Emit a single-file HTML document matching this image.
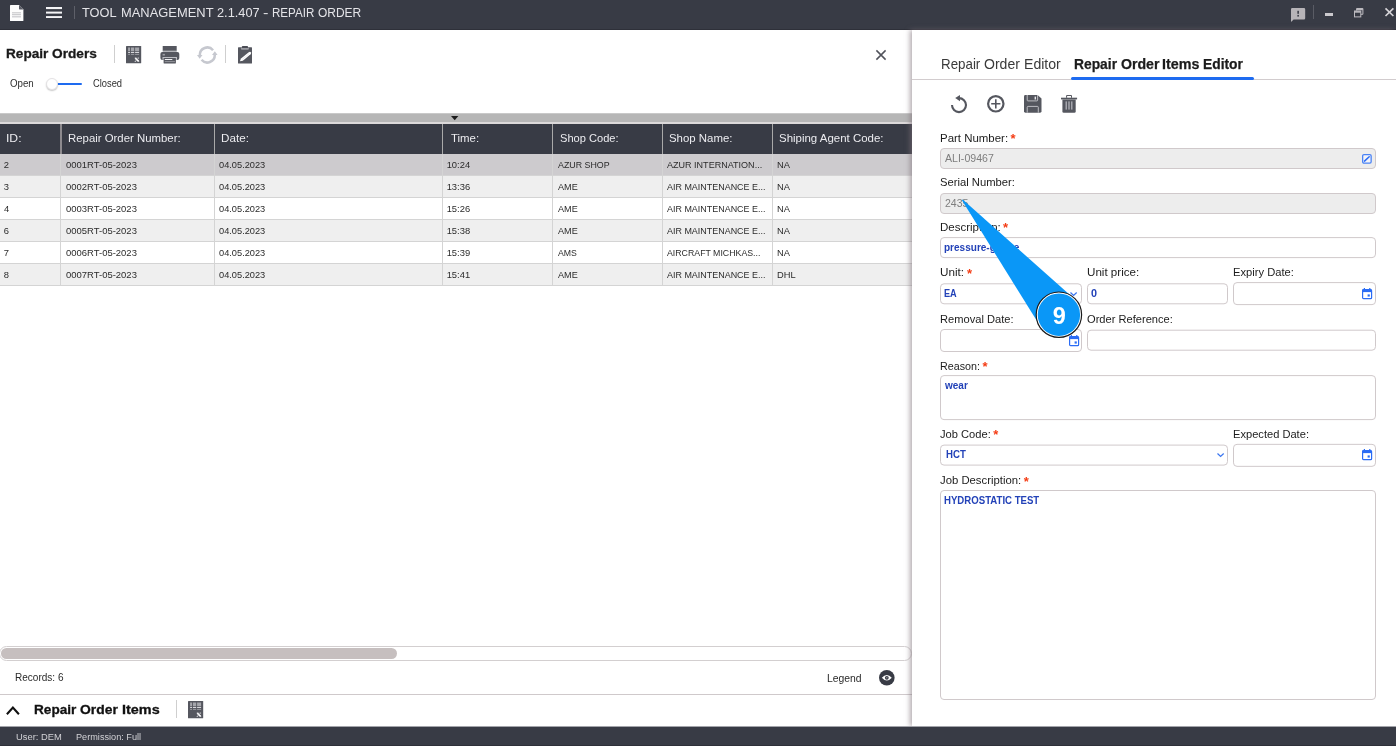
<!DOCTYPE html>
<html><head><meta charset="utf-8">
<style>
*{box-sizing:border-box;margin:0;padding:0}
html,body{width:1396px;height:746px;overflow:hidden;background:#fff;font-family:"Liberation Sans",sans-serif;color:#222}
#root{position:absolute;left:0;top:0;width:1396px;height:746px;will-change:transform}
svg{position:absolute;overflow:visible}
.t{position:absolute;white-space:pre;line-height:1;display:block}
#titlebar{position:absolute;left:0;top:0;width:1396px;height:30px;background:#383b45;border-bottom:1px solid #2e3039}
#status{position:absolute;left:0;top:726px;width:1396px;height:20px;background:#383b45;border-top:1px solid #a3a4aa;border-bottom:1px solid #2e3039}
#right{position:absolute;left:912px;top:30px;width:484px;height:696px;background:#fff;box-shadow:-2px 0 5px rgba(125,112,120,.6)}
#right svg{z-index:2}
.vsep{position:absolute;width:1px;background:#cfcfcf}
#gbar{position:absolute;left:0;top:113px;width:912px;height:11px;background:#b6b6b6;border-bottom:2px solid #dcd9da;border-top:1px solid #c9c9c9}
#ghead{position:absolute;left:0;top:124px;width:912px;height:30px;background:#383b45;overflow:hidden}
.th{position:absolute;top:0;height:30px;border-left:1px solid #a9a9a9}
.row{position:absolute;left:0;width:912px;height:22px;border-bottom:1px solid #d4d4d4;overflow:hidden}
.row div{position:absolute;top:0;height:22px;border-left:1px solid #d4d4d4}
.inp{position:absolute;border:1px solid #d0c9cb;border-radius:4px;background:#fff}
.dis{background:#ededed}
</style></head><body>
<div id="root">
<div id="titlebar">
<svg style="left:10.4px;top:4.7px" width="13.4" height="16.1" viewBox="0 0 13.4 16.1"><path d="M.6 0H9L13.4 4.4V15.5Q13.4 16.1 12.8 16.1H.6Q0 16.1 0 15.5V.6Q0 0 .6 0Z" fill="#fdfdfd"/><path d="M9 0L13.4 4.4H9.6Q9 4.4 9 3.8Z" fill="#5a5c66"/>
<g fill="#b9b9bd"><rect x="2" y="7.4" width="9" height=".9"/><rect x="2" y="9.3" width="9" height=".9"/><rect x="2" y="11.4" width="9" height=".9"/></g></svg>
<svg style="left:46.2px;top:7px" width="16" height="11" viewBox="0 0 16 11"><g fill="#f4f4f6"><rect y="0" width="16" height="2.1"/><rect y="4.6" width="16" height="2"/><rect y="9.1" width="16" height="1.9"/></g></svg>
<div style="position:absolute;left:74.3px;top:5.7px;width:1.2px;height:13px;background:#5e6069"></div>
<svg style="left:1290.6px;top:8.1px" width="14.2" height="14" viewBox="0 0 14.2 14"><path d="M1.2 0H13Q14.2 0 14.2 1.2V10.2Q14.2 11.4 13 11.4H2.6L0 14V1.2Q0 0 1.2 0Z" fill="#b7b4b8"/><rect x="6.3" y="2.8" width="1.7" height="3" fill="#44464f"/><rect x="6.3" y="6.9" width="1.7" height="1.7" fill="#44464f"/></svg>
<div style="position:absolute;left:1313px;top:5.4px;width:1.2px;height:13.3px;background:#5a5c65"></div>
<div style="position:absolute;left:1325px;top:13px;width:8px;height:2.8px;background:#cbc9cd"></div>
<svg style="left:1354.4px;top:7.9px" width="9.4" height="9.4" viewBox="0 0 9.4 9.4"><g fill="none" stroke="#bdbbc0" stroke-width="1"><path d="M2.6 2.6V.5H8.9V6.3H6.8"/><path d="M2.6 1.4H8.9" stroke-width="1.6"/><rect x=".5" y="3" width="6.3" height="5.9"/><path d="M.5 3.9H6.8" stroke-width="1.6"/></g></svg>
<svg style="left:1384.6px;top:8.3px" width="8.9" height="8.3" viewBox="0 0 8.9 8.3"><path d="M.5 .3L8.4 8M8.4 .3L.5 8" stroke="#d6d4d8" stroke-width="1.7"/></svg>
 
<span class="t" style="left:82.26px;top:6.39px;font-size:13.6px;color:#e4e4e8;transform:scaleX(0.9417);transform-origin:0 0;">TOOL</span>
<span class="t" style="left:120.75px;top:6.39px;font-size:13.6px;color:#e4e4e8;transform:scaleX(0.9496);transform-origin:0 0;">MANAGEMENT</span>
<span class="t" style="left:216.50px;top:6.39px;font-size:13.6px;color:#e4e4e8;transform:scaleX(0.9386);transform-origin:0 0;">2.1.407</span>
<span class="t" style="left:263.20px;top:6.39px;font-size:13.6px;color:#e4e4e8;transform:scaleX(1.2000);transform-origin:0 0;">-</span>
<span class="t" style="left:272.15px;top:6.39px;font-size:13.6px;color:#e4e4e8;transform:scaleX(0.8521);transform-origin:0 0;">REPAIR</span>
<span class="t" style="left:318.46px;top:6.39px;font-size:13.6px;color:#e4e4e8;transform:scaleX(0.8813);transform-origin:0 0;">ORDER</span>
</div>
<span class="t" style="left:6.14px;top:47.07px;font-size:13.5px;font-weight:bold;color:#1a1a1a;-webkit-text-stroke:.3px #1a1a1a;transform:scaleX(1.0073);transform-origin:0 0;">Repair</span><span class="t" style="left:52.39px;top:47.07px;font-size:13.5px;font-weight:bold;color:#1a1a1a;-webkit-text-stroke:.3px #1a1a1a;transform:scaleX(1.0127);transform-origin:0 0;">Orders</span>
<div class="vsep" style="left:114px;top:45px;height:18px"></div><div class="vsep" style="left:225px;top:45px;height:18px"></div>
<svg  style="left:125.8px;top:46px" width="15.2" height="17.3" viewBox="0 0 15.2 17.3"><rect width="15.2" height="17.3" rx=".5" fill="#55575f"/>
<g fill="#a4a5ab"><rect x="2.1" y="1.5" width="2" height="3.8"/><rect x="5" y="1.5" width="3.2" height="3.8"/><rect x="9.1" y="1.5" width="4" height="3.8"/></g>
<g fill="#d6d6da"><rect x="2.1" y="6" width="2" height="1"/><rect x="5" y="6" width="3.2" height="1"/><rect x="9.1" y="6" width="4" height="1"/></g>
<g fill="#a9aab0"><rect x="2.1" y="7.9" width="2" height=".8"/><rect x="5" y="7.9" width="3.2" height=".8"/><rect x="9.1" y="7.9" width="4" height=".8"/></g>
<path d="M9.3 12.1L12.7 15.4" stroke="#fff" stroke-width="1.5"/><path d="M12.7 12.1L9.1 15.4" stroke="#d0d0d4" stroke-width=".8"/><path d="M8.7 12h1.9M11.6 12h1.5M8.6 15.5h1.5M11.6 15.5h1.7" stroke="#e4e4e7" stroke-width=".6"/></svg><svg  style="left:160.4px;top:46px" width="19.6" height="17.5" viewBox="0 0 19.6 17.5"><rect x="2.7" y="0" width="14" height="4.85" fill="#55575f"/><rect x="2.7" y="4.85" width="14" height="1.2" fill="#b4b5ba"/>
<rect x=".4" y="6" width="18.9" height="7.9" rx="2" fill="#55575f"/><rect x="2.5" y="11" width="14.5" height="2.9" fill="#bfc0c5"/>
<rect x="3.6" y="11.9" width="12.3" height="5.5" rx=".4" fill="#55575f"/><rect x="4.8" y="13" width="7.5" height="1" fill="#f2f2f4"/><rect x="4.8" y="15.2" width="10.1" height=".9" fill="#9c9da3"/>
<rect x="2.6" y="7.9" width="2.3" height="1.6" fill="#9fa0a6"/></svg><svg  style="left:197.3px;top:46px" width="20.6" height="18" viewBox="0 0 20.6 18"><g fill="none" stroke="#c6c8cf" stroke-width="2.5">
<path d="M16.05 4.18A7.5 7.5 0 0 0 2.8 9.2"/><path d="M4.55 13.82A7.5 7.5 0 0 0 17.8 8.8"/></g>
<path d="M0 8.9H5.5L2.7 12.7Z" fill="#c6c8cf"/><path d="M15 9.1H20.6L17.8 5.2Z" fill="#c6c8cf"/></svg><svg  style="left:238.1px;top:46px" width="14.1" height="17.4" viewBox="0 0 14.1 17.4"><rect x="0" y="1.15" width="14" height="16.25" rx=".5" fill="#55575f"/>
<rect x="2.9" y="1.15" width="8" height="2.6" rx="1" fill="#9b9ca2"/><rect x="4" y="0" width="6" height="2.1" rx=".6" fill="#4b4d55"/>
<path d="M1.9 15.3L2.98 12.53L10.78 6.13Q12.3 5.1 13 6.4Q13.4 7.5 12.62 8.37L4.82 14.77Z" fill="#fff"/><path d="M4.6 13.1L10.8 8" stroke="#d9d9dd" stroke-width="1" stroke-dasharray=".7 .5"/></svg><svg  style="left:876.4px;top:49.6px" width="10" height="10" viewBox="0 0 10 10"><path d="M.4 .4L9.6 9.6M9.6 .4L.4 9.6" stroke="#50525a" stroke-width="1.5"/></svg>

<span class="t" style="left:10.01px;top:79.23px;font-size:10px;color:#2f2f2f;transform:scaleX(0.9720);transform-origin:0 0;">Open</span>
<span class="t" style="left:93.43px;top:79.23px;font-size:10px;color:#2f2f2f;transform:scaleX(0.9333);transform-origin:0 0;">Closed</span>
<div style="position:absolute;left:52px;top:82.8px;width:29.5px;height:2.7px;background:#1e6bf0;border-radius:2px"></div>
<div style="position:absolute;left:45.6px;top:78px;width:12.4px;height:12.4px;border-radius:6.2px;background:#fff;border:1px solid #e4e2e4;box-shadow:0 1px 1.5px rgba(0,0,0,.22)"></div>
<div id="gbar"></div><svg style="left:451.4px;top:116.4px" width="7.4" height="4.2"><path d="M0 0H7.4L3.7 4.2Z" fill="#1c1c1c"/></svg>
<div id="ghead">
<div class="th" style="left:-1px;width:61px"></div><span class="t" style="left:6.01px;top:9.32px;font-size:11.2px;color:#ececf0;transform:scaleX(1.0857);transform-origin:0 0;">ID:</span>
<div class="th" style="left:60px;width:154px"></div><span class="t" style="left:67.78px;top:9.32px;font-size:11.2px;color:#ececf0;transform:scaleX(1.0179);transform-origin:0 0;">Repair Order Number:</span>
<div class="th" style="left:214px;width:228px"></div><span class="t" style="left:221.36px;top:9.32px;font-size:11.2px;color:#ececf0;transform:scaleX(1.0424);transform-origin:0 0;">Date:</span>
<div class="th" style="left:442px;width:110px"></div><span class="t" style="left:450.54px;top:9.32px;font-size:11.2px;color:#ececf0;transform:scaleX(1.0210);transform-origin:0 0;">Time:</span>
<div class="th" style="left:552px;width:110px"></div><span class="t" style="left:560.20px;top:9.32px;font-size:11.2px;color:#ececf0;transform:scaleX(0.9922);transform-origin:0 0;">Shop Code:</span>
<div class="th" style="left:662px;width:110px"></div><span class="t" style="left:669.49px;top:9.32px;font-size:11.2px;color:#ececf0;transform:scaleX(1.0206);transform-origin:0 0;">Shop Name:</span>
<div class="th" style="left:772px;width:140px"></div><span class="t" style="left:779.49px;top:9.32px;font-size:11.2px;color:#ececf0;transform:scaleX(1.0249);transform-origin:0 0;">Shiping Agent Code:</span>
<div style="position:absolute;left:60px;top:0;width:2px;height:30px;background:#8d8a8e"></div>
</div>
<div class="row" style="top:154px;background:#cdcbce">
<div style="left:-1px;width:61px"></div><span class="t" style="left:3.80px;top:5.94px;font-size:9.4px;color:#2b2b2b;">2</span>
<div style="left:60px;width:154px"></div><span class="t" style="left:65.55px;top:5.94px;font-size:9.4px;color:#2b2b2b;transform:scaleX(1.0101);transform-origin:0 0;">0001RT-05-2023</span>
<div style="left:214px;width:228px"></div><span class="t" style="left:219.35px;top:5.94px;font-size:9.4px;color:#2b2b2b;transform:scaleX(0.9859);transform-origin:0 0;">04.05.2023</span>
<div style="left:442px;width:110px"></div><span class="t" style="left:446.65px;top:5.94px;font-size:9.4px;color:#2b2b2b;">10:24</span>
<div style="left:552px;width:110px"></div><span class="t" style="left:557.50px;top:5.94px;font-size:9.4px;color:#2b2b2b;transform:scaleX(0.9438);transform-origin:0 0;">AZUR SHOP</span>
<div style="left:662px;width:110px"></div><span class="t" style="left:667.30px;top:5.94px;font-size:9.4px;color:#2b2b2b;transform:scaleX(0.9633);transform-origin:0 0;">AZUR INTERNATION...</span>
<div style="left:772px;width:140px"></div><span class="t" style="left:776.65px;top:5.94px;font-size:9.4px;color:#2b2b2b;transform:scaleX(0.9959);transform-origin:0 0;">NA</span>
</div>
<div class="row" style="top:176px;background:#efefef">
<div style="left:-1px;width:61px"></div><span class="t" style="left:3.80px;top:5.94px;font-size:9.4px;color:#2b2b2b;">3</span>
<div style="left:60px;width:154px"></div><span class="t" style="left:65.55px;top:5.94px;font-size:9.4px;color:#2b2b2b;transform:scaleX(1.0101);transform-origin:0 0;">0002RT-05-2023</span>
<div style="left:214px;width:228px"></div><span class="t" style="left:219.35px;top:5.94px;font-size:9.4px;color:#2b2b2b;transform:scaleX(0.9859);transform-origin:0 0;">04.05.2023</span>
<div style="left:442px;width:110px"></div><span class="t" style="left:446.65px;top:5.94px;font-size:9.4px;color:#2b2b2b;">13:36</span>
<div style="left:552px;width:110px"></div><span class="t" style="left:557.50px;top:5.94px;font-size:9.4px;color:#2b2b2b;transform:scaleX(0.9700);transform-origin:0 0;">AME</span>
<div style="left:662px;width:110px"></div><span class="t" style="left:667.30px;top:5.94px;font-size:9.4px;color:#2b2b2b;transform:scaleX(0.9545);transform-origin:0 0;">AIR MAINTENANCE E...</span>
<div style="left:772px;width:140px"></div><span class="t" style="left:776.65px;top:5.94px;font-size:9.4px;color:#2b2b2b;transform:scaleX(0.9959);transform-origin:0 0;">NA</span>
</div>
<div class="row" style="top:198px;background:#ffffff">
<div style="left:-1px;width:61px"></div><span class="t" style="left:4.05px;top:5.94px;font-size:9.4px;color:#2b2b2b;">4</span>
<div style="left:60px;width:154px"></div><span class="t" style="left:65.55px;top:5.94px;font-size:9.4px;color:#2b2b2b;transform:scaleX(1.0101);transform-origin:0 0;">0003RT-05-2023</span>
<div style="left:214px;width:228px"></div><span class="t" style="left:219.35px;top:5.94px;font-size:9.4px;color:#2b2b2b;transform:scaleX(0.9859);transform-origin:0 0;">04.05.2023</span>
<div style="left:442px;width:110px"></div><span class="t" style="left:446.65px;top:5.94px;font-size:9.4px;color:#2b2b2b;">15:26</span>
<div style="left:552px;width:110px"></div><span class="t" style="left:557.50px;top:5.94px;font-size:9.4px;color:#2b2b2b;transform:scaleX(0.9700);transform-origin:0 0;">AME</span>
<div style="left:662px;width:110px"></div><span class="t" style="left:667.30px;top:5.94px;font-size:9.4px;color:#2b2b2b;transform:scaleX(0.9545);transform-origin:0 0;">AIR MAINTENANCE E...</span>
<div style="left:772px;width:140px"></div><span class="t" style="left:776.65px;top:5.94px;font-size:9.4px;color:#2b2b2b;transform:scaleX(0.9959);transform-origin:0 0;">NA</span>
</div>
<div class="row" style="top:220px;background:#efefef">
<div style="left:-1px;width:61px"></div><span class="t" style="left:3.80px;top:5.94px;font-size:9.4px;color:#2b2b2b;">6</span>
<div style="left:60px;width:154px"></div><span class="t" style="left:65.55px;top:5.94px;font-size:9.4px;color:#2b2b2b;transform:scaleX(1.0101);transform-origin:0 0;">0005RT-05-2023</span>
<div style="left:214px;width:228px"></div><span class="t" style="left:219.35px;top:5.94px;font-size:9.4px;color:#2b2b2b;transform:scaleX(0.9859);transform-origin:0 0;">04.05.2023</span>
<div style="left:442px;width:110px"></div><span class="t" style="left:446.65px;top:5.94px;font-size:9.4px;color:#2b2b2b;">15:38</span>
<div style="left:552px;width:110px"></div><span class="t" style="left:557.50px;top:5.94px;font-size:9.4px;color:#2b2b2b;transform:scaleX(0.9700);transform-origin:0 0;">AME</span>
<div style="left:662px;width:110px"></div><span class="t" style="left:667.30px;top:5.94px;font-size:9.4px;color:#2b2b2b;transform:scaleX(0.9545);transform-origin:0 0;">AIR MAINTENANCE E...</span>
<div style="left:772px;width:140px"></div><span class="t" style="left:776.65px;top:5.94px;font-size:9.4px;color:#2b2b2b;transform:scaleX(0.9959);transform-origin:0 0;">NA</span>
</div>
<div class="row" style="top:242px;background:#ffffff">
<div style="left:-1px;width:61px"></div><span class="t" style="left:3.80px;top:5.94px;font-size:9.4px;color:#2b2b2b;">7</span>
<div style="left:60px;width:154px"></div><span class="t" style="left:65.55px;top:5.94px;font-size:9.4px;color:#2b2b2b;transform:scaleX(1.0101);transform-origin:0 0;">0006RT-05-2023</span>
<div style="left:214px;width:228px"></div><span class="t" style="left:219.35px;top:5.94px;font-size:9.4px;color:#2b2b2b;transform:scaleX(0.9859);transform-origin:0 0;">04.05.2023</span>
<div style="left:442px;width:110px"></div><span class="t" style="left:446.65px;top:5.94px;font-size:9.4px;color:#2b2b2b;">15:39</span>
<div style="left:552px;width:110px"></div><span class="t" style="left:557.50px;top:5.94px;font-size:9.4px;color:#2b2b2b;transform:scaleX(0.9300);transform-origin:0 0;">AMS</span>
<div style="left:662px;width:110px"></div><span class="t" style="left:667.30px;top:5.94px;font-size:9.4px;color:#2b2b2b;transform:scaleX(0.9354);transform-origin:0 0;">AIRCRAFT MICHKAS...</span>
<div style="left:772px;width:140px"></div><span class="t" style="left:776.65px;top:5.94px;font-size:9.4px;color:#2b2b2b;transform:scaleX(0.9959);transform-origin:0 0;">NA</span>
</div>
<div class="row" style="top:264px;background:#efefef">
<div style="left:-1px;width:61px"></div><span class="t" style="left:3.80px;top:5.94px;font-size:9.4px;color:#2b2b2b;">8</span>
<div style="left:60px;width:154px"></div><span class="t" style="left:65.55px;top:5.94px;font-size:9.4px;color:#2b2b2b;transform:scaleX(1.0101);transform-origin:0 0;">0007RT-05-2023</span>
<div style="left:214px;width:228px"></div><span class="t" style="left:219.35px;top:5.94px;font-size:9.4px;color:#2b2b2b;transform:scaleX(0.9859);transform-origin:0 0;">04.05.2023</span>
<div style="left:442px;width:110px"></div><span class="t" style="left:446.65px;top:5.94px;font-size:9.4px;color:#2b2b2b;">15:41</span>
<div style="left:552px;width:110px"></div><span class="t" style="left:557.50px;top:5.94px;font-size:9.4px;color:#2b2b2b;transform:scaleX(0.9700);transform-origin:0 0;">AME</span>
<div style="left:662px;width:110px"></div><span class="t" style="left:667.30px;top:5.94px;font-size:9.4px;color:#2b2b2b;transform:scaleX(0.9545);transform-origin:0 0;">AIR MAINTENANCE E...</span>
<div style="left:772px;width:140px"></div><span class="t" style="left:776.66px;top:5.94px;font-size:9.4px;color:#2b2b2b;transform:scaleX(0.9915);transform-origin:0 0;">DHL</span>
</div>
<div style="position:absolute;left:-1px;top:646px;width:913px;height:15px;border:1px solid #d3cfd0;border-radius:7.5px;background:#fff"></div>
<div style="position:absolute;left:1px;top:648px;width:396px;height:11px;border-radius:5.5px;background:#c6bfbf"></div>
<span class="t" style="left:14.58px;top:672.80px;font-size:10.4px;color:#2a2a2a;transform:scaleX(0.9653);transform-origin:0 0;">Records: 6</span>
<span class="t" style="left:826.57px;top:672.73px;font-size:10.6px;color:#2a2a2a;transform:scaleX(0.9794);transform-origin:0 0;">Legend</span>
<div style="position:absolute;left:0;top:694px;width:912px;height:1px;background:#cfc9cb"></div>
<span class="t" style="left:34.04px;top:702.67px;font-size:13.5px;font-weight:bold;color:#111;-webkit-text-stroke:.3px #111;transform:scaleX(1.0073);transform-origin:0 0;">Repair</span><span class="t" style="left:80.49px;top:702.67px;font-size:13.5px;font-weight:bold;color:#111;-webkit-text-stroke:.3px #111;transform:scaleX(1.0278);transform-origin:0 0;">Order</span><span class="t" style="left:121.70px;top:702.67px;font-size:13.5px;font-weight:bold;color:#111;-webkit-text-stroke:.3px #111;transform:scaleX(1.0676);transform-origin:0 0;">Items</span>
<div class="vsep" style="left:176px;top:700px;height:18px"></div>
<svg style="left:6.3px;top:706.2px" width="13.8" height="9" viewBox="0 0 13.8 9"><path d="M.9 8.2L6.9 1.6L12.9 8.2" fill="none" stroke="#111" stroke-width="2.1"/></svg><svg  style="left:188.2px;top:701px" width="15.2" height="17.3" viewBox="0 0 15.2 17.3"><rect width="15.2" height="17.3" rx=".5" fill="#55575f"/>
<g fill="#a4a5ab"><rect x="2.1" y="1.5" width="2" height="3.8"/><rect x="5" y="1.5" width="3.2" height="3.8"/><rect x="9.1" y="1.5" width="4" height="3.8"/></g>
<g fill="#d6d6da"><rect x="2.1" y="6" width="2" height="1"/><rect x="5" y="6" width="3.2" height="1"/><rect x="9.1" y="6" width="4" height="1"/></g>
<g fill="#a9aab0"><rect x="2.1" y="7.9" width="2" height=".8"/><rect x="5" y="7.9" width="3.2" height=".8"/><rect x="9.1" y="7.9" width="4" height=".8"/></g>
<path d="M9.3 12.1L12.7 15.4" stroke="#fff" stroke-width="1.5"/><path d="M12.7 12.1L9.1 15.4" stroke="#d0d0d4" stroke-width=".8"/><path d="M8.7 12h1.9M11.6 12h1.5M8.6 15.5h1.5M11.6 15.5h1.7" stroke="#e4e4e7" stroke-width=".6"/></svg><svg  style="left:878.9px;top:669.6px" width="15.6" height="15.6" viewBox="0 0 15.6 15.6"><circle cx="7.8" cy="7.8" r="7.8" fill="#383b45"/>
<path d="M2.8 7.8Q7.8 2.2 12.8 7.8Q7.8 13.4 2.8 7.8Z" fill="#fff"/><circle cx="7.8" cy="7.8" r="1.9" fill="#383b45"/><circle cx="7.8" cy="7.8" r=".8" fill="#8b8d94"/></svg>

<div id="right">
<span class="t" style="left:28.74px;top:26.81px;font-size:14.4px;color:#3a3a3a;transform:scaleX(0.9268);transform-origin:0 0;">Repair</span>
<span class="t" style="left:71.87px;top:26.81px;font-size:14.4px;color:#3a3a3a;transform:scaleX(0.9762);transform-origin:0 0;">Order</span>
<span class="t" style="left:111.78px;top:26.81px;font-size:14.4px;color:#3a3a3a;transform:scaleX(0.9793);transform-origin:0 0;">Editor</span>
<span class="t" style="left:162.24px;top:26.81px;font-size:14.4px;font-weight:bold;color:#1c1c1c;-webkit-text-stroke:.25px #1c1c1c;transform:scaleX(0.9609);transform-origin:0 0;">Repair</span>
<span class="t" style="left:208.91px;top:26.81px;font-size:14.4px;font-weight:bold;color:#1c1c1c;-webkit-text-stroke:.25px #1c1c1c;transform:scaleX(0.9818);transform-origin:0 0;">Order</span>
<span class="t" style="left:250.21px;top:26.81px;font-size:14.4px;font-weight:bold;color:#1c1c1c;-webkit-text-stroke:.25px #1c1c1c;transform:scaleX(0.9944);transform-origin:0 0;">Items</span>
<span class="t" style="left:291.04px;top:26.81px;font-size:14.4px;font-weight:bold;color:#1c1c1c;-webkit-text-stroke:.25px #1c1c1c;transform:scaleX(0.9605);transform-origin:0 0;">Editor</span>
<div style="position:absolute;left:0;top:49px;width:484px;height:1px;background:#d2ccce"></div>
<div style="position:absolute;left:159.4px;top:47px;width:182.5px;height:3px;background:#1e6bf0;border-radius:1.5px"></div>
<svg style="left:37.8px;top:64.6px" width="18" height="18.6" viewBox="0 0 18 18.6"><path d="M9 3.1A7 7 0 1 1 2 10.1" fill="none" stroke="#55575f" stroke-width="2.1"/><path d="M5.2 3.1L10 0V6.2Z" fill="#55575f"/></svg><svg style="left:74.9px;top:65.05px" width="17.6" height="17.6" viewBox="0 0 17.6 17.6"><circle cx="8.8" cy="8.8" r="7.7" fill="none" stroke="#55575f" stroke-width="2.2"/><path d="M4.2 8.8H13.4M8.8 4.2V13.4" stroke="#55575f" stroke-width="1.6"/></svg><svg style="left:112px;top:65px" width="17.5" height="17.7" viewBox="0 0 17.5 17.7"><path d="M1.4 0H13.6L17.5 3.6V16.3Q17.5 17.7 16.1 17.7H1.4Q0 17.7 0 16.3V1.4Q0 0 1.4 0Z" fill="#55575f"/>
<path d="M3.2 0V5.2Q3.2 5.9 3.9 5.9H12.9Q13.6 5.9 13.6 5.2V0" fill="none" stroke="#c9cace" stroke-width=".9"/><rect x="10.6" y="1.6" width="1.4" height="2.9" fill="#e9e9ec"/>
<path d="M3.2 17.7V12.3Q3.2 11.4 4.1 11.4H13.4Q14.3 11.4 14.3 12.3V17.7" fill="none" stroke="#c9cace" stroke-width=".9"/></svg><svg style="left:149.2px;top:65px" width="16.1" height="17.7" viewBox="0 0 16.1 17.7"><path d="M5.6 2.8V.5H10.5V2.8" fill="none" stroke="#55575f" stroke-width="1"/><rect x="0" y="2.7" width="16.1" height="1.7" fill="#55575f"/>
<path d="M1.4 4.4H14.7V16.4Q14.7 17.7 13.4 17.7H2.7Q1.4 17.7 1.4 16.4Z" fill="#55575f"/><g fill="#b9bac0"><rect x="4.6" y="6.4" width="1.2" height="8.2"/><rect x="7.4" y="6.4" width="1.2" height="8.2"/><rect x="10.2" y="6.4" width="1.2" height="8.2"/></g></svg><svg style="left:449.7px;top:123.9px" width="9.8" height="9.8" viewBox="0 0 9.8 9.8"><rect x=".65" y=".65" width="8.5" height="8.5" rx="1.3" fill="#f4f4f8" stroke="#4a83f5" stroke-width="1.3"/><path d="M2.5 7.1L7.2 2.7" stroke="#2a6cf5" stroke-width="1.5" stroke-linecap="round"/></svg><svg style="left:450.2px;top:257.9px" width="10.2" height="11.3" viewBox="0 0 10.2 11.3"><rect x="1.8" y="0" width="1.2" height="2" fill="#2a6cf5"/><rect x="7.2" y="0" width="1.2" height="2" fill="#2a6cf5"/><rect x=".6" y="1.5" width="9" height="9.2" rx="1" fill="#fff" stroke="#2a6cf5" stroke-width="1.2"/><rect x=".6" y="1.5" width="9" height="2.6" fill="#2a6cf5"/><rect x="5.6" y="6.4" width="2.2" height="2.2" fill="#2a6cf5"/></svg><svg style="left:156.5px;top:304.9px" width="10.2" height="11.3" viewBox="0 0 10.2 11.3"><rect x="1.8" y="0" width="1.2" height="2" fill="#2a6cf5"/><rect x="7.2" y="0" width="1.2" height="2" fill="#2a6cf5"/><rect x=".6" y="1.5" width="9" height="9.2" rx="1" fill="#fff" stroke="#2a6cf5" stroke-width="1.2"/><rect x=".6" y="1.5" width="9" height="2.6" fill="#2a6cf5"/><rect x="5.6" y="6.4" width="2.2" height="2.2" fill="#2a6cf5"/></svg><svg style="left:450.2px;top:418.9px" width="10.2" height="11.3" viewBox="0 0 10.2 11.3"><rect x="1.8" y="0" width="1.2" height="2" fill="#2a6cf5"/><rect x="7.2" y="0" width="1.2" height="2" fill="#2a6cf5"/><rect x=".6" y="1.5" width="9" height="9.2" rx="1" fill="#fff" stroke="#2a6cf5" stroke-width="1.2"/><rect x=".6" y="1.5" width="9" height="2.6" fill="#2a6cf5"/><rect x="5.6" y="6.4" width="2.2" height="2.2" fill="#2a6cf5"/></svg><svg  style="left:157.9px;top:261.7px" width="7.2" height="4.4" viewBox="0 0 7.2 4.4"><path d="M.5 .5L3.6 3.5L6.7 .5" fill="none" stroke="#3b76f0" stroke-width="1.25"/></svg><svg  style="left:304.9px;top:422.9px" width="7.2" height="4.4" viewBox="0 0 7.2 4.4"><path d="M.5 .5L3.6 3.5L6.7 .5" fill="none" stroke="#3b76f0" stroke-width="1.25"/></svg>

<span class="t" style="left:27.86px;top:102.99px;font-size:11px;color:#1c1c1c;transform:scaleX(1.0409);transform-origin:0 0;">Part Number:</span><span class="t" style="left:98.60px;top:102.20px;font-size:13px;font-weight:bold;color:#f43c14;">*</span><div class="inp dis" style="left:28px;top:118px;width:436px;height:21px"></div><span class="t" style="left:32.60px;top:122.59px;font-size:11px;color:#7e7e7e;transform:scaleX(0.9612);transform-origin:0 0;">ALI-09467</span>
<span class="t" style="left:28.19px;top:147.49px;font-size:11px;color:#1c1c1c;transform:scaleX(1.0222);transform-origin:0 0;">Serial Number:</span><div class="inp dis" style="left:28px;top:163px;width:436px;height:21px"></div><span class="t" style="left:32.52px;top:167.59px;font-size:11px;color:#7e7e7e;transform:scaleX(0.9574);transform-origin:0 0;">2435</span>
<span class="t" style="left:27.65px;top:192.09px;font-size:11px;color:#1c1c1c;transform:scaleX(1.0464);transform-origin:0 0;">Description:</span><span class="t" style="left:91.00px;top:191.30px;font-size:13px;font-weight:bold;color:#f43c14;">*</span><div class="inp" style="left:28px;top:207px;width:436px;height:21px;transform:translateY(0.10px)"></div><span class="t" style="left:32.20px;top:212.06px;font-size:10.8px;font-weight:bold;color:#2342b8;transform:scaleX(0.9287);transform-origin:0 0;">pressure-gauge</span>
<span class="t" style="left:28.10px;top:237.39px;font-size:11px;color:#1c1c1c;transform:scaleX(1.0619);transform-origin:0 0;">Unit:</span><span class="t" style="left:54.90px;top:236.60px;font-size:13px;font-weight:bold;color:#f43c14;">*</span><span class="t" style="left:174.91px;top:237.39px;font-size:11px;color:#1c1c1c;transform:scaleX(1.0555);transform-origin:0 0;">Unit price:</span><span class="t" style="left:320.88px;top:237.39px;font-size:11px;color:#1c1c1c;transform:scaleX(1.0155);transform-origin:0 0;">Expiry Date:</span>
<div class="inp" style="left:28px;top:253px;width:142px;height:21px;transform:translateY(0.30px)"></div><span class="t" style="left:32.36px;top:258.06px;font-size:10.8px;font-weight:bold;color:#2342b8;transform:scaleX(0.8500);transform-origin:0 0;">EA</span><div class="inp" style="left:175px;top:253px;width:141px;height:21px;transform:translateY(0.30px)"></div><span class="t" style="left:179.00px;top:258.06px;font-size:10.8px;font-weight:bold;color:#2342b8;">0</span><div class="inp" style="left:321px;top:252px;width:143px;height:22.8px;transform:translateY(0.10px)"></div>
<span class="t" style="left:27.89px;top:283.69px;font-size:11px;color:#1c1c1c;transform:scaleX(1.0106);transform-origin:0 0;">Removal Date:</span><span class="t" style="left:174.70px;top:283.69px;font-size:11px;color:#1c1c1c;transform:scaleX(1.0096);transform-origin:0 0;">Order Reference:</span><div class="inp" style="left:28px;top:299px;width:142px;height:22.8px"></div><div class="inp" style="left:175px;top:299px;width:289px;height:21px;transform:translateY(0.70px)"></div>
<span class="t" style="left:27.93px;top:330.59px;font-size:11px;color:#1c1c1c;transform:scaleX(0.9744);transform-origin:0 0;">Reason:</span><span class="t" style="left:70.60px;top:329.80px;font-size:13px;font-weight:bold;color:#f43c14;">*</span><div class="inp" style="left:28px;top:345px;width:436px;height:45px;transform:translateY(0.10px)"></div><span class="t" style="left:33.00px;top:350.06px;font-size:10.8px;font-weight:bold;color:#2342b8;transform:scaleX(0.9265);transform-origin:0 0;">wear</span>
<span class="t" style="left:27.95px;top:399.19px;font-size:11px;color:#1c1c1c;transform:scaleX(1.0122);transform-origin:0 0;">Job Code:</span><span class="t" style="left:81.20px;top:398.40px;font-size:13px;font-weight:bold;color:#f43c14;">*</span><span class="t" style="left:320.89px;top:399.19px;font-size:11px;color:#1c1c1c;transform:scaleX(1.0102);transform-origin:0 0;">Expected Date:</span><div class="inp" style="left:28px;top:414px;width:288px;height:21px;transform:translateY(0.60px)"></div><span class="t" style="left:34.33px;top:419.06px;font-size:10.8px;font-weight:bold;color:#2342b8;transform:scaleX(0.8930);transform-origin:0 0;">HCT</span><div class="inp" style="left:321px;top:413px;width:143px;height:22.8px;transform:translateY(0.85px)"></div>
<span class="t" style="left:27.94px;top:445.39px;font-size:11px;color:#1c1c1c;transform:scaleX(1.0289);transform-origin:0 0;">Job Description:</span><span class="t" style="left:111.70px;top:444.60px;font-size:13px;font-weight:bold;color:#f43c14;">*</span><div class="inp" style="left:28px;top:460px;width:436px;height:210px"></div><span class="t" style="left:32.43px;top:465.06px;font-size:10.8px;font-weight:bold;color:#2342b8;transform:scaleX(0.8904);transform-origin:0 0;">HYDROSTATIC TEST</span>
</div>
<svg style="left:0;top:0" width="1396" height="746" viewBox="0 0 1396 746"><path d="M961.8 200.1L962.7 199.6L1072 296.8L1041 327.4Z" fill="#0a97f7"/>
<circle cx="1058.9" cy="314.7" r="22.7" fill="#fff" stroke="#1a1a1a" stroke-width="1.2"/><circle cx="1058.9" cy="314.7" r="21.2" fill="#0a97f7"/>
<text x="1059.3" y="323.9" text-anchor="middle" font-family="Liberation Sans" font-weight="bold" font-size="23.5" fill="#fff">9</text></svg>
<div id="status"><span class="t" style="left:16.14px;top:5.91px;font-size:9.2px;color:#d2d2d6;transform:scaleX(1.0184);transform-origin:0 0;">User: DEM</span><span class="t" style="left:76.15px;top:5.91px;font-size:9.2px;color:#d2d2d6;transform:scaleX(0.9953);transform-origin:0 0;">Permission: Full</span></div>
</div>
</body></html>
